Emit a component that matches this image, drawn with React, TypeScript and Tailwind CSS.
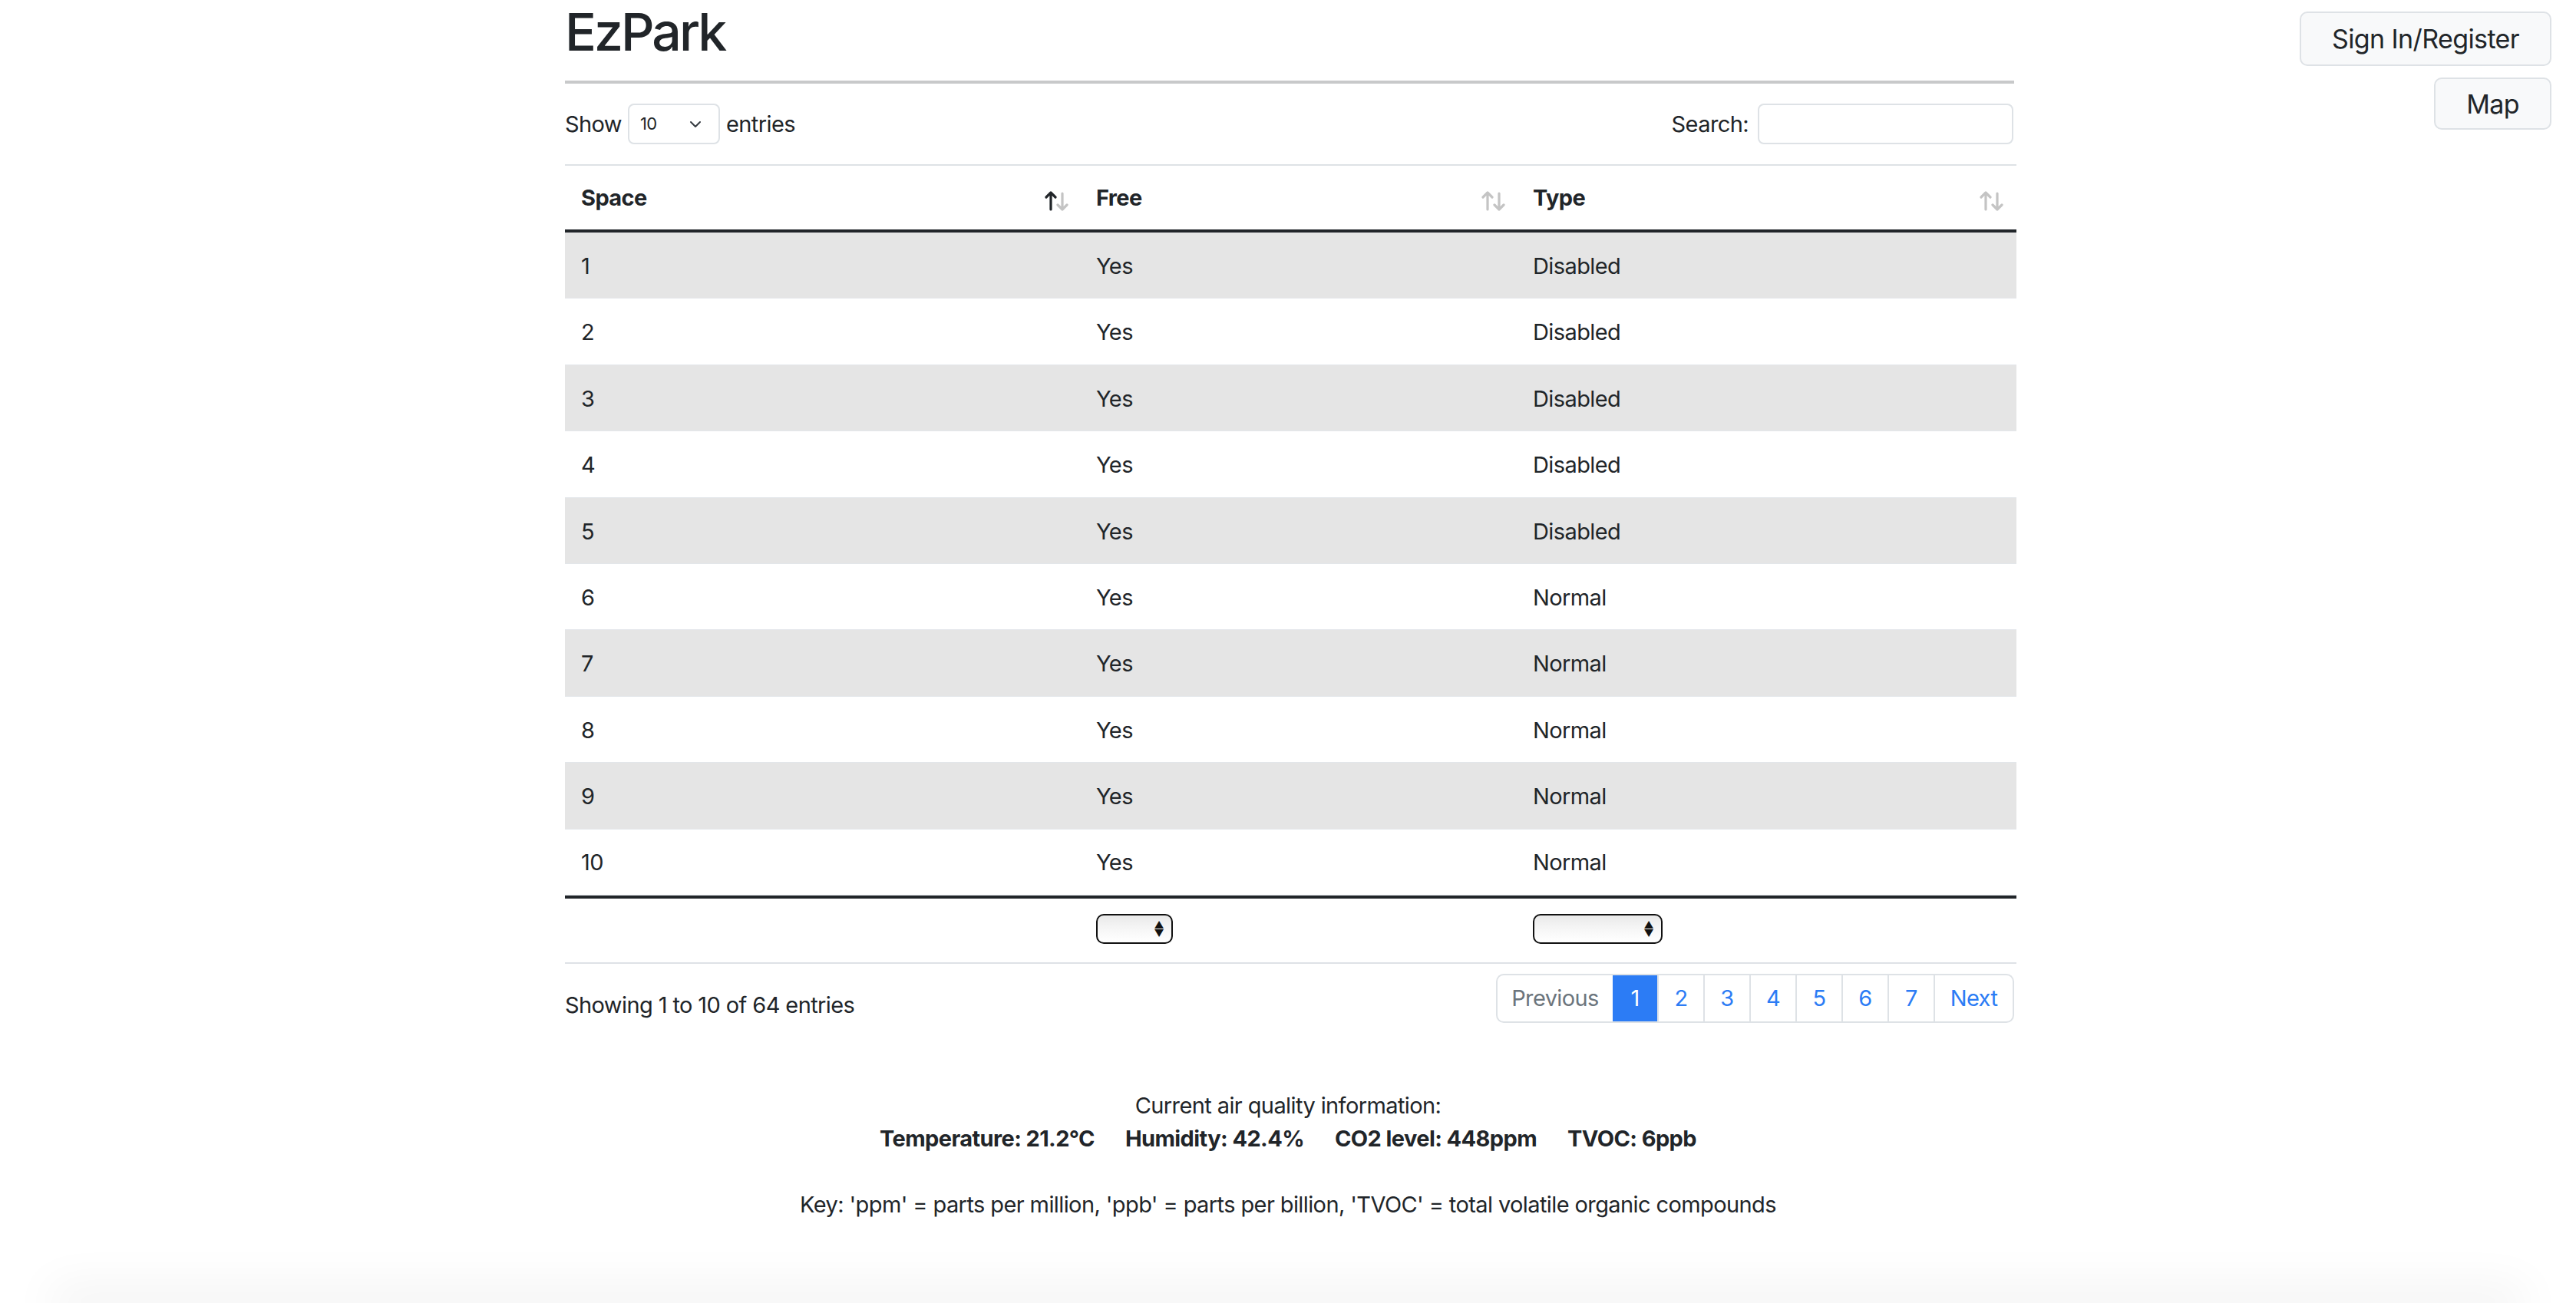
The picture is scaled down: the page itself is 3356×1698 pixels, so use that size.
import React from "react";

const rows = [
  { space: 1, free: "Yes", type: "Disabled" },
  { space: 2, free: "Yes", type: "Disabled" },
  { space: 3, free: "Yes", type: "Disabled" },
  { space: 4, free: "Yes", type: "Disabled" },
  { space: 5, free: "Yes", type: "Disabled" },
  { space: 6, free: "Yes", type: "Normal" },
  { space: 7, free: "Yes", type: "Normal" },
  { space: 8, free: "Yes", type: "Normal" },
  { space: 9, free: "Yes", type: "Normal" },
  { space: 10, free: "Yes", type: "Normal" },
];

function SortIcon({ active }: { active?: boolean }) {
  return (
    <svg width="32" height="28" viewBox="0 0 32 28" fill="none" strokeWidth="3.2" strokeLinecap="round" strokeLinejoin="round">
      <g stroke={active ? "#212529" : "#c4c4c4"}>
        <path d="M8 25V3M2 9l6-6 6 6" />
      </g>
      <g stroke="#c4c4c4">
        <path d="M23 4v21M17 19l6 6 6-6" />
      </g>
    </svg>
  );
}

function NativeSelect({ width }: { width: string }) {
  return (
    <div className={`${width} flex h-[39px] items-center justify-end rounded-[10px] border-2 border-[#111] bg-gradient-to-b from-[#e9e9e9] via-[#f6f6f6] to-white pr-[10px]`}>
      <div className="flex flex-col items-center leading-none text-[13px] text-[#111]">
        <span className="-mb-[2px]">▲</span>
        <span>▼</span>
      </div>
    </div>
  );
}

export default function App() {
  return (
    <div className="flex min-h-screen flex-col overflow-hidden bg-white font-['Inter','Noto_Sans',sans-serif] tracking-[-0.6px] text-[#212529]">
      <div className="grid grid-cols-[736px_1891px_1fr]">
        <div />
        <main>
          <h1 className="pt-[1px] text-[68px] font-medium leading-[80px] tracking-[-3px]">EzPark</h1>
          <div className="mt-[24px] h-[4px] w-[1888px] bg-[#c8c9ca]" />

          <div className="flex items-center justify-between py-[26px] pr-[4px] text-[29px]">
            <div className="flex items-center gap-[8px]">
              <span>Show</span>
              <div className="flex h-[53px] w-[120px] items-center justify-between rounded-[8px] border-2 border-[#dee2e6] pl-[14px] pr-[22px] text-[22px]">
                <span>10</span>
                <svg width="16" height="10" viewBox="0 0 16 10" fill="none" stroke="#343a40" strokeWidth="2" strokeLinecap="round" strokeLinejoin="round">
                  <path d="M2 2l6 6 6-6" />
                </svg>
              </div>
              <span>entries</span>
            </div>
            <div className="flex items-center gap-[12px]">
              <span>Search:</span>
              <div className="h-[53px] w-[333px] rounded-[8px] border-2 border-[#dee2e6]" />
            </div>
          </div>

          <div className="text-[29px]">
            <div className="h-[2px] bg-[#dee2e6]" />
            <div className="grid h-[83px] grid-cols-[671px_569px_651px] items-center font-bold">
              <div className="flex items-center justify-between pl-[21px] pr-[14px]">
                <span>Space</span>
                <span className="mt-[8px]"><SortIcon active /></span>
              </div>
              <div className="flex items-center justify-between pl-[21px] pr-[14px]">
                <span>Free</span>
                <span className="mt-[8px]"><SortIcon /></span>
              </div>
              <div className="flex items-center justify-between pl-[21px] pr-[16px]">
                <span>Type</span>
                <span className="mt-[8px]"><SortIcon /></span>
              </div>
            </div>
            <div className="h-[4px] bg-[#212529]" />
            {rows.map((r, i) => (
              <div
                key={r.space}
                className={`grid h-[86.4px] grid-cols-[671px_569px_651px] items-center border-b border-[#e3e6ea] pt-[2px] ${i % 2 === 0 ? "bg-[#e5e5e5]" : "bg-white"}`}
              >
                <div className="pl-[21px]">{r.space}</div>
                <div className="pl-[21px]">{r.free}</div>
                <div className="pl-[21px]">{r.type}</div>
              </div>
            ))}
            <div className="h-[4px] bg-[#212529]" />
            <div className="grid h-[83px] grid-cols-[671px_569px_651px] items-center pb-[3px]">
              <div />
              <div className="pl-[21px]">
                <NativeSelect width="w-[100px]" />
              </div>
              <div className="pl-[21px]">
                <NativeSelect width="w-[169px]" />
              </div>
            </div>
            <div className="h-[2px] bg-[#dee2e6]" />
          </div>

          <div className="flex items-start justify-between pt-[13px] text-[29px]">
            <div className="pt-[19px]">Showing 1 to 10 of 64 entries</div>
            <div className="mr-[3px] flex h-[64px] overflow-hidden rounded-[10px] border-2 border-[#dee2e6] text-[29px]">
              <div className="flex w-[150px] items-center justify-center text-[#6c757d]">Previous</div>
              <div className="flex w-[58px] items-center justify-center bg-[#2c7cf5] text-white">1</div>
              {[2, 3, 4, 5, 6, 7].map((n) => (
                <div key={n} className="flex w-[60px] items-center justify-center border-l-2 border-[#dee2e6] text-[#2c7cf5]">
                  {n}
                </div>
              ))}
              <div className="flex w-[103px] items-center justify-center border-l-2 border-[#dee2e6] text-[#2c7cf5]">Next</div>
            </div>
          </div>
        </main>
        <aside className="flex flex-col items-end gap-[15px] pr-[32px] pt-[15px]">
          <div className="flex h-[71px] items-center rounded-[10px] border-2 border-[#dee2e6] bg-[#f8f9fa] px-[40px] text-[34px]">
            Sign In/Register
          </div>
          <div className="flex h-[68px] items-center rounded-[10px] border-2 border-[#dee2e6] bg-[#f8f9fa] px-[40px] text-[34px]">
            Map
          </div>
        </aside>
      </div>

      <section className="mt-[86px] flex flex-col items-center text-[29px] leading-[43px]">
        <div>Current air quality information:</div>
        <div className="flex gap-[40px] font-bold">
          <span>Temperature: 21.2°C</span>
          <span>Humidity: 42.4%</span>
          <span>CO2 level: 448ppm</span>
          <span>TVOC: 6ppb</span>
        </div>
        <div className="mt-[43px]">
          Key: 'ppm' = parts per million, 'ppb' = parts per billion, 'TVOC' = total volatile organic compounds
        </div>
      </section>

      <div className="mx-[90px] mt-auto h-0 shadow-[0_0_60px_24px_rgba(0,0,0,0.05)]" />
    </div>
  );
}
